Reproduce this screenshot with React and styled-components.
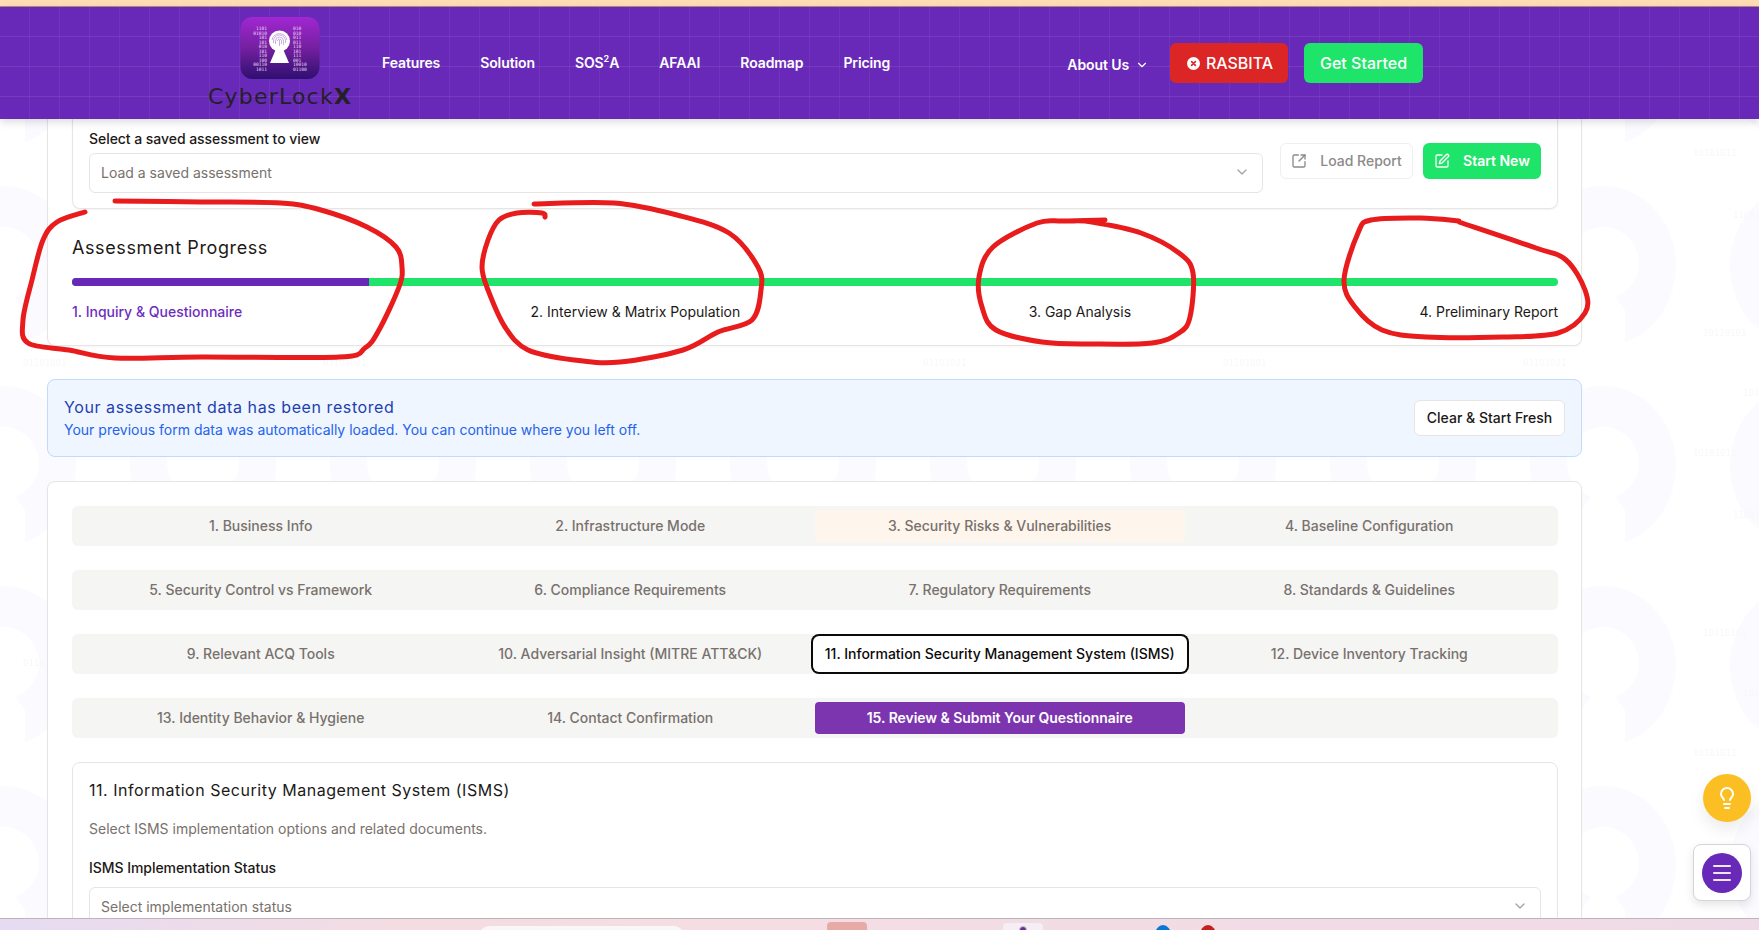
import React from "react";
import styled, { createGlobalStyle } from "styled-components";
import { ChevronDown, SquareArrowOutUpRight, SquarePen, Lightbulb, Menu } from "lucide-react";

const GlobalStyle = createGlobalStyle`
  html, body { margin: 0; padding: 0; height: 100%; overflow: hidden; background: #fff; }
  body { font-family: Inter, "Liberation Sans", sans-serif; color: #1c1917; }
  * { box-sizing: border-box; }
`;

const headingFont = `"Inter", "Liberation Sans", sans-serif`;

const Page = styled.div`
  position: relative;
  width: 1759px;
  height: 930px;
  display: flex;
  flex-direction: column;
  overflow: hidden;
  background: #fff;
`;
const Watermark = styled.svg`
  position: absolute;
  inset: 0;
  z-index: 0;
`;
const Ink = styled.svg`
  position: absolute;
  inset: 0;
  z-index: 5;
  pointer-events: none;
`;
const TopStrip = styled.div`
  height: 7px;
  flex: none;
  background: #fedcb6;
  border-bottom: 1px solid #a98f7e;
  position: relative;
  z-index: 3;
`;
const Header = styled.header`
  height: 112px;
  flex: none;
  display: flex;
  align-items: center;
  padding: 0 336px 0 208px;
  position: relative;
  z-index: 3;
  background-color: #6929b8;
  background-image:
    linear-gradient(to right, transparent 29px, rgba(255,255,255,.055) 29px),
    linear-gradient(to bottom, transparent 29px, rgba(255,255,255,.08) 29px);
  background-size: 30px 30px;
  box-shadow: 0 3px 8px rgba(0,0,0,.14);
`;
const Brand = styled.div`
  width: 144px;
  display: flex;
  flex-direction: column;
  align-items: center;
  gap: 6px;
`;
const BrandName = styled.div`
  font-family: "DejaVu Sans", sans-serif;
  font-size: 22px;
  line-height: 24px;
  letter-spacing: 1.2px;
  color: #232028;
  white-space: nowrap;
  b { font-weight: 700; }
`;
const Nav = styled.nav`
  display: flex;
  gap: 40px;
  margin-left: 30px;
`;
const NavLink = styled.a`
  font-size: 14px;
  line-height: 20px;
  font-weight: 600;
  color: #fff;
  letter-spacing: -.1px;
  sup { font-size: 9px; line-height: 0; }
`;
const Actions = styled.div`
  margin-left: auto;
  display: flex;
  align-items: center;
`;
const AboutLink = styled(NavLink)`
  display: flex;
  align-items: center;
  gap: 6px;
  margin: 4px 21px 0 0;
`;
const HeaderButton = styled.button`
  height: 40px;
  border: 0;
  border-radius: 6px;
  display: flex;
  align-items: center;
  justify-content: center;
  gap: ${p => p.$gap || 0}px;
  font: 500 16px/24px Inter, sans-serif;
  color: #fff;
  background: ${p => p.$bg};
  width: ${p => p.$w}px;
  margin-left: ${p => p.$ml || 0}px;
  padding: 0 0 0 ${p => p.$pl || 0}px;
`;
const Main = styled.main`
  flex: 1;
  min-height: 0;
  overflow: hidden;
  position: relative;
  z-index: 1;
  padding-left: 47px;
`;
const Panel = styled.section`
  width: 1535px;
  background: #fff;
  border: 1px solid #e7e5e4;
  border-radius: 8px;
  padding: ${p => p.$pad};
  box-shadow: 0 1px 2px rgba(0,0,0,.04);
  margin-top: ${p => p.$mt || 0}px;
`;
const TopPanel = styled(Panel)`
  border-top: 0;
  border-radius: 0 0 8px 8px;
`;
const SavedCard = styled.div`
  border: 1px solid #e7e5e4;
  border-top: 0;
  border-radius: 0 0 8px 8px;
  padding: 10px 16px 15px 16px;
  display: flex;
  align-items: center;
  gap: 17px;
  box-shadow: 0 1px 2px rgba(0,0,0,.05);
`;
const Field = styled.div`
  flex: 1;
  min-width: 0;
`;
const FieldLabel = styled.label`
  display: block;
  font-size: 14px;
  line-height: 20px;
  font-weight: 500;
  color: #1c1917;
  margin-bottom: ${p => p.$mb ?? 4}px;
  letter-spacing: -.05px;
`;
const Select = styled.div`
  height: 40px;
  border: 1px solid #e7e5e4;
  border-radius: 6px;
  background: #fff;
  display: flex;
  align-items: center;
  justify-content: space-between;
  padding: 0 12px 2px 11px;
  font-size: 14px;
  color: #78716c;
  svg { color: #a8a29e; }
`;
const ActionButton = styled.button`
  height: 36px;
  border-radius: 6px;
  display: flex;
  align-items: center;
  justify-content: center;
  gap: 13px;
  font: ${p => p.$primary ? 600 : 500} 14px/20px Inter, sans-serif;
  padding: 0;
  flex: none;
  width: ${p => p.$w}px;
  margin-right: ${p => p.$mr || 0}px;
  color: ${p => p.$primary ? "#fff" : "#8d8a88"};
  background: ${p => p.$primary ? "#1fe46a" : "#fff"};
  border: ${p => p.$primary ? "0" : "1px solid #f0efee"};
`;
const ProgressTitle = styled.h2`
  margin: 25px 0 16px;
  font-family: ${headingFont};
  font-size: 18px;
  line-height: 28px;
  font-weight: 400;
  letter-spacing: .6px;
  color: #1c1917;
`;
const Track = styled.div`
  height: 8px;
  border-radius: 4px;
  background: #1fe46a;
  overflow: hidden;
`;
const TrackFill = styled.div`
  height: 100%;
  background: #6929b8;
`;
const StepRow = styled.div`
  display: flex;
  justify-content: space-between;
  margin-top: 16px;
`;
const Step = styled.span`
  font-size: 14px;
  line-height: 20px;
  color: ${p => p.$active ? "#6d2dc0" : "#1c1917"};
  font-weight: ${p => p.$active ? 500 : 400};
`;
const Alert = styled.section`
  width: 1535px;
  margin-top: 33px;
  padding: 16px;
  background: #eff6ff;
  border: 1px solid #bfdbfe;
  border-radius: 8px;
  display: flex;
  align-items: center;
  justify-content: space-between;
`;
const AlertTitle = styled.div`
  font-family: ${headingFont};
  font-size: 16px;
  line-height: 22px;
  margin-bottom: 2px;
  font-weight: 400;
  letter-spacing: .58px;
  color: #1e40af;
`;
const AlertText = styled.div`
  font-size: 14px;
  line-height: 20px;
  color: #2563eb;
`;
const ClearButton = styled.button`
  width: 151px;
  height: 36px;
  padding: 0;
  background: #fff;
  border: 1px solid #e7e5e4;
  border-radius: 6px;
  font: 500 14px/20px Inter, sans-serif;
  color: #1c1917;
`;
const TabList = styled.div`
  display: grid;
  grid-template-columns: repeat(4, 1fr);
  height: 40px;
  padding: 4px;
  background: #f5f5f4;
  border-radius: 6px;
  margin-bottom: 24px;
`;
const Tab = styled.button`
  position: relative;
  border: 0;
  padding: 0;
  height: 32px;
  border-radius: 4px;
  font: ${p => p.$variant === "submit" ? 600 : 500} 14px/20px Inter, sans-serif;
  letter-spacing: ${p => p.$variant === "submit" ? "-.05px" : "0"};
  white-space: nowrap;
  background: ${p => ({ done: "#fef5ec", current: "#fff", submit: "#7c35ae" }[p.$variant] || "transparent")};
  color: ${p => ({ current: "#0c0a09", submit: "#fff" }[p.$variant] || "#78716c")};
  box-shadow: ${p => p.$variant === "current" ? "0 0 0 2px #fff, 0 0 0 4px #0c0a09" : "none"};
`;
const SectionCard = styled.div`
  border: 1px solid #e7e5e4;
  border-radius: 8px;
  padding: 15px 16px 16px;
  width: 1486px;
`;
const SectionTitle = styled.h3`
  margin: 0 0 17px;
  font-family: ${headingFont};
  font-size: 16px;
  line-height: 24px;
  font-weight: 400;
  letter-spacing: .52px;
  color: #1c1917;
`;
const SectionHint = styled.p`
  margin: 0 0 19px;
  font-size: 14px;
  line-height: 20px;
  color: #78716c;
`;
const BottomBar = styled.div`
  height: 12px;
  flex: none;
  position: relative;
  z-index: 3;
  overflow: hidden;
  display: flex;
  align-items: flex-start;
  padding-left: 479px;
  background: linear-gradient(90deg, #e6dbf2 0%, #f3dde3 22%, #f4dde3 45%, #efdbe7 100%);
  border-top: 1px solid #bcb4b8;
`;
const TaskItem = styled.span`
  flex: none;
  width: ${p => p.$w}px;
  height: 20px;
  margin-left: ${p => p.$ml || 0}px;
  margin-top: ${p => p.$top}px;
  background: ${p => p.$bg};
  border-radius: ${p => p.$radius};
  display: flex;
  justify-content: center;
`;
const TaskGlyph = styled.span`
  width: 8px;
  height: 8px;
  margin-top: 3px;
  border-radius: 50%;
  background: #6b2f8f;
  border: 1px solid #cdb8d6;
`;
const HelpFab = styled.button`
  position: absolute;
  z-index: 4;
  left: 1703px;
  top: 774px;
  width: 48px;
  height: 48px;
  border: 0;
  padding: 0;
  border-radius: 50%;
  background: #fbbf24;
  color: #fff;
  display: flex;
  align-items: center;
  justify-content: center;
  box-shadow: 0 8px 16px rgba(0,0,0,.08);
`;
const MenuDock = styled.div`
  position: absolute;
  z-index: 4;
  left: 1693px;
  top: 844px;
  width: 58px;
  height: 57px;
  background: #fff;
  border: 1px solid #d6d3d9;
  border-radius: 8px;
  display: flex;
  align-items: center;
  justify-content: center;
  box-shadow: 0 4px 10px rgba(0,0,0,.1);
`;
const MenuFab = styled.button`
  width: 40px;
  height: 40px;
  border: 0;
  padding: 0;
  border-radius: 50%;
  background: #6929b8;
  color: #f0e6fb;
  display: flex;
  align-items: center;
  justify-content: center;
`;

const smooth = pts => {
  let d = `M${pts[0][0]} ${pts[0][1]}`;
  for (let i = 0; i < pts.length - 1; i++) {
    const p0 = pts[i - 1] || pts[i];
    const p1 = pts[i];
    const p2 = pts[i + 1];
    const p3 = pts[i + 2] || p2;
    d += ` C${p1[0] + (p2[0] - p0[0]) / 6} ${p1[1] + (p2[1] - p0[1]) / 6} ${p2[0] - (p3[0] - p1[0]) / 6} ${p2[1] - (p3[1] - p1[1]) / 6} ${p2[0]} ${p2[1]}`;
  }
  return d;
};

const inkLoops = [
  [[85,212],[57,222],[43,240],[32,280],[23,320],[28,343],[69,350],[115,358],[201,357],[339,357],[365,348],[379,330],[399,287],[402,267],[396,247],[367,227],[321,210],[281,203],[201,202],[115,201]],
  [[545,217],[542,213],[517,213],[499,220],[488,240],[482,267],[488,290],[505,327],[528,350],[574,360],[620,362],[683,350],[718,332],[752,320],[761,290],[758,267],[729,233],[677,215],[614,203],[534,204]],
  [[1105,220],[1064,221],[1037,223],[993,247],[979,277],[982,307],[996,330],[1042,342],[1092,344],[1152,343],[1179,333],[1190,317],[1193,273],[1179,253],[1141,233],[1092,222],[1070,221]],
  [[1459,221],[1421,218],[1371,220],[1358,233],[1344,280],[1355,307],[1382,330],[1426,337],[1503,337],[1558,333],[1585,313],[1585,290],[1566,260],[1536,248],[1459,222]],
];

const tabs = [
  [["1. Business Info"], ["2. Infrastructure Mode"], ["3. Security Risks & Vulnerabilities", "done"], ["4. Baseline Configuration"]],
  [["5. Security Control vs Framework"], ["6. Compliance Requirements"], ["7. Regulatory Requirements"], ["8. Standards & Guidelines"]],
  [["9. Relevant ACQ Tools"], ["10. Adversarial Insight (MITRE ATT&CK)"], ["11. Information Security Management System (ISMS)", "current"], ["12. Device Inventory Tracking"]],
  [["13. Identity Behavior & Hygiene"], ["14. Contact Confirmation"], ["15. Review & Submit Your Questionnaire", "submit"]],
];

const binaryMarks = [
  [193, 156, "10101011"], [203, 36, "10110101"], [233, 218, "11001010"], [243, 96, "10100110"], [23, 66, "01101001"],
];

const leftDigits = ["1101", "01010", "101", "101", "010", "101", "110", "100", "00110", "1011"];
const rightDigits = ["010", "010", "011", "011", "110", "101", "111", "001", "10010", "01100"];

const Logo = () => (
  <svg width="80" height="62" viewBox="0 0 80 62">
    <defs>
      <linearGradient id="logoFill" x1="0" y1="0" x2="0" y2="1">
        <stop offset="0" stopColor="#a127d2" />
        <stop offset=".5" stopColor="#74209f" />
        <stop offset="1" stopColor="#2e0f70" />
      </linearGradient>
    </defs>
    <rect x="0.5" width="79" height="62" rx="12" fill="url(#logoFill)" />
    <g fontFamily="'DejaVu Sans Mono', monospace" fontSize="4.6" fill="#e9d8f5">
      {leftDigits.map((t, i) => <text key={i} x="27" y={13 + i * 4.5} textAnchor="end">{t}</text>)}
      {rightDigits.map((t, i) => <text key={i} x="53" y={13 + i * 4.5}>{t}</text>)}
    </g>
    <circle cx="39.5" cy="24" r="10.5" fill="#fff" />
    <path d="M36 32 L30 46 L49 46 L43 32Z" fill="#fff" />
    <g fill="none" stroke="#b48ad2" strokeWidth=".7">
      <path d="M37.5 24a2 2 0 0 1 4 0v3" />
      <path d="M35.5 27v-3a4 4 0 0 1 8 0v4" />
      <path d="M33.5 26v-2a6 6 0 0 1 12 0v2" />
      <path d="M32 23a7.6 7.6 0 0 1 15 0" />
      <path d="M39.5 23v6" />
    </g>
  </svg>
);

const StopIcon = () => (
  <svg width="13" height="13" viewBox="0 0 13 13">
    <circle cx="6.5" cy="6.5" r="6.5" fill="#fff" />
    <path d="M4.6 4.6 L8.4 8.4 M8.4 4.6 L4.6 8.4" stroke="#dc2626" strokeWidth="1.6" strokeLinecap="round" />
  </svg>
);

export default function App() {
  return (
    <Page>
      <GlobalStyle />
      <Watermark width="1759" height="930">
        <defs>
          <pattern id="locks" width="200" height="200" patternUnits="userSpaceOnUse" patternTransform="translate(-97 -37)">
            <path transform="translate(100 100)" fill="#fafaff" d="M22 79 L22 47 L12 34 A36 36 0 1 0 -12 34 L-22 47 L-22 79 A73 80 0 1 1 22 79Z" />
          </pattern>
          <pattern id="bits" width="300" height="300" patternUnits="userSpaceOnUse">
            {binaryMarks.map(([x, y, t]) => (
              <text key={t} x={x} y={y} fontFamily="'DejaVu Sans Mono', monospace" fontSize="9" fill="#f8f8fb">{t}</text>
            ))}
          </pattern>
        </defs>
        <rect width="1759" height="930" fill="url(#locks)" />
        <rect width="1759" height="930" fill="url(#bits)" />
      </Watermark>

      <TopStrip />
      <Header>
        <Brand>
          <Logo />
          <BrandName>CyberLock<b>X</b></BrandName>
        </Brand>
        <Nav>
          <NavLink>Features</NavLink>
          <NavLink>Solution</NavLink>
          <NavLink>SOS<sup>2</sup>A</NavLink>
          <NavLink>AFAAI</NavLink>
          <NavLink>Roadmap</NavLink>
          <NavLink>Pricing</NavLink>
        </Nav>
        <Actions>
          <AboutLink>About Us <ChevronDown size={14} /></AboutLink>
          <HeaderButton $bg="#dc2626" $w={118} $gap={6} $pl={2}><StopIcon /> RASBITA</HeaderButton>
          <HeaderButton $bg="#1fe46a" $w={119} $ml={16}>Get Started</HeaderButton>
        </Actions>
      </Header>

      <Main>
        <TopPanel $pad="0 23px 23px 24px">
          <SavedCard>
            <Field>
              <FieldLabel>Select a saved assessment to view</FieldLabel>
              <Select>Load a saved assessment <ChevronDown size={16} /></Select>
            </Field>
            <ActionButton $w={133} $mr={-7}><SquareArrowOutUpRight size={16} /> Load Report</ActionButton>
            <ActionButton $primary $w={118}><SquarePen size={16} /> Start New</ActionButton>
          </SavedCard>
          <ProgressTitle>Assessment Progress</ProgressTitle>
          <Track><TrackFill style={{ width: "20%" }} /></Track>
          <StepRow>
            <Step $active>1. Inquiry &amp; Questionnaire</Step>
            <Step>2. Interview &amp; Matrix Population</Step>
            <Step>3. Gap Analysis</Step>
            <Step>4. Preliminary Report</Step>
          </StepRow>
        </TopPanel>

        <Alert>
          <div>
            <AlertTitle>Your assessment data has been restored</AlertTitle>
            <AlertText>Your previous form data was automatically loaded. You can continue where you left off.</AlertText>
          </div>
          <ClearButton>Clear &amp; Start Fresh</ClearButton>
        </Alert>

        <Panel $mt={24} $pad="24px 23px 24px 24px">
          {tabs.map((row, r) => (
            <TabList key={r}>
              {row.map(([label, variant]) => <Tab key={label} $variant={variant}>{label}</Tab>)}
            </TabList>
          ))}
          <SectionCard>
            <SectionTitle>11. Information Security Management System (ISMS)</SectionTitle>
            <SectionHint>Select ISMS implementation options and related documents.</SectionHint>
            <FieldLabel $mb={9}>ISMS Implementation Status</FieldLabel>
            <Select>Select implementation status <ChevronDown size={16} /></Select>
          </SectionCard>
        </Panel>
      </Main>

      <BottomBar>
        <TaskItem $w={205} $top={7} $bg="#fbf6f8" $radius="10px 10px 0 0" />
        <TaskItem $w={40} $ml={143} $top={3} $bg="#e8aaa7" $radius="4px" />
        <TaskItem $w={40} $ml={136} $top={4} $bg="#f6eef5" $radius="4px"><TaskGlyph /></TaskItem>
        <TaskItem $w={16} $ml={112} $top={6} $bg="#0a78d4" $radius="50%" />
        <TaskItem $w={16} $ml={29} $top={6} $bg="#c4201d" $radius="50%" />
      </BottomBar>

      <HelpFab><Lightbulb size={24} /></HelpFab>
      <MenuDock><MenuFab><Menu size={24} /></MenuFab></MenuDock>

      <Ink width="1759" height="930">
        {inkLoops.map((pts, i) => (
          <path key={i} d={smooth(pts)} fill="none" stroke="#e81c1c" strokeWidth="5" strokeLinecap="round" strokeLinejoin="round" />
        ))}
      </Ink>
    </Page>
  );
}
